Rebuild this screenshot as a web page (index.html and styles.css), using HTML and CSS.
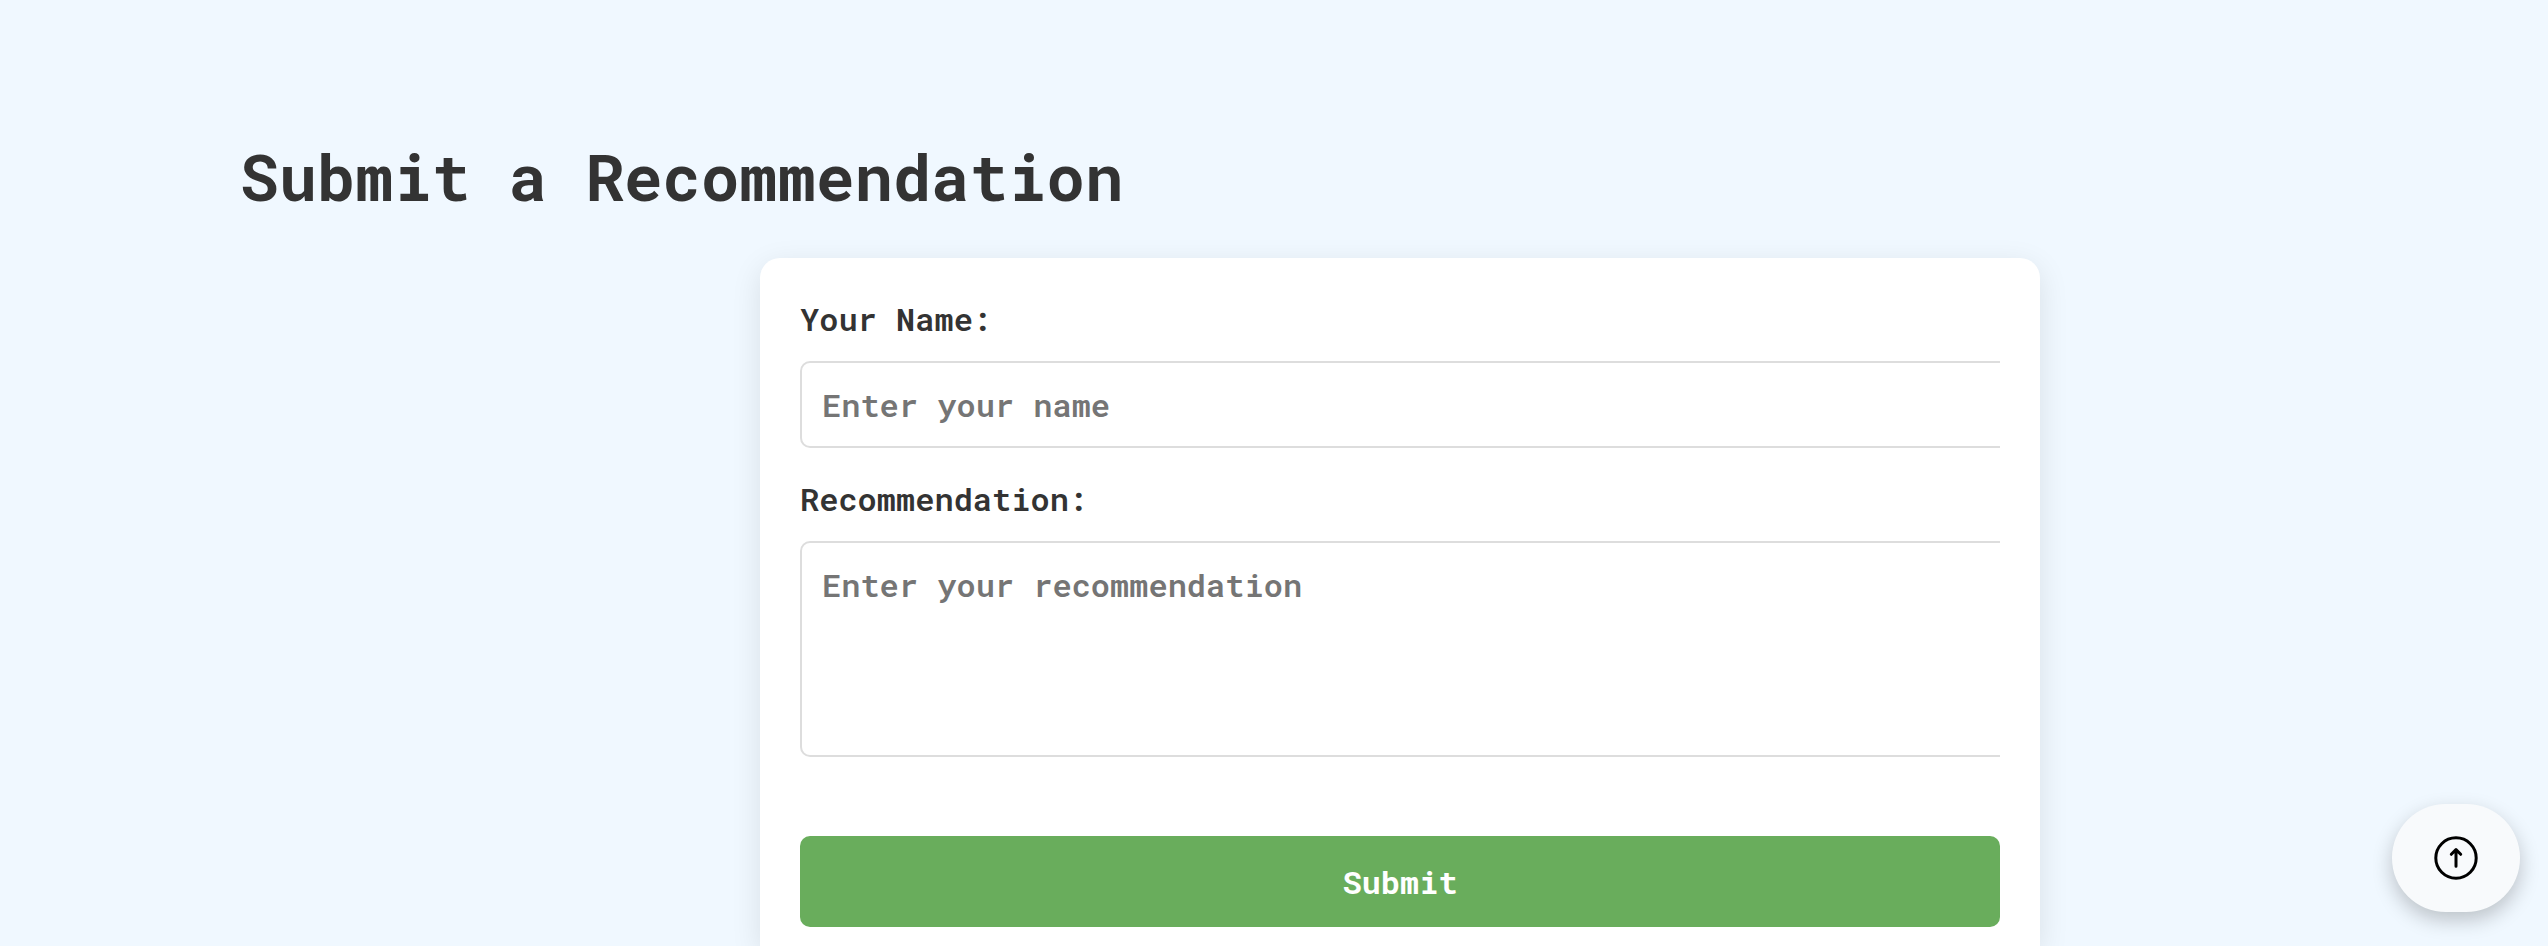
FILE: index.html
```html
<!DOCTYPE html>
<html lang="en">
<head>
<meta charset="utf-8">
<title>Submit a Recommendation</title>
<link rel="stylesheet" href="styles.css">
</head>
<body>
<section class="recommend">
  <h1 class="title">Submit a Recommendation</h1>
  <form class="card">
    <label class="label" for="name">Your Name:</label>
    <div class="field"><input class="control" id="name" type="text" placeholder="Enter your name"></div>
    <label class="label" for="text">Recommendation:</label>
    <div class="field"><textarea class="control area" id="text" placeholder="Enter your recommendation"></textarea></div>
    <button class="submit" type="button">Submit</button>
  </form>
</section>
<a class="to-top" href="#" aria-label="Back to top">
  <svg class="to-top-icon" viewBox="0 0 44 44" fill="none" stroke="#000" stroke-width="3" stroke-linecap="round" stroke-linejoin="round">
    <circle cx="22" cy="22" r="20.200"/>
    <path d="M22 30.300V13.800M17.300 18.300L22 13.600L26.700 18.300"/>
  </svg>
</a>
</body>
</html>
```
FILE: styles.css
```css
* { box-sizing: border-box; }
body {
  margin: 0;
  height: 946px;
  overflow: hidden;
  background: #f0f8ff;
  color: #333;
  font-family: "Roboto Mono", "Liberation Mono", monospace;
  font-weight: 600;
}
.recommend { padding: 134px 240px 0; }
.title {
  margin: 0 0 40px;
  font-size: 64px;
  line-height: 84px;
  font-weight: 660;
}
.card {
  width: 1280px;
  height: 688px;
  margin-left: 520px;
  padding: 40px;
  background: #fff;
  border-radius: 20px 20px 0 0;
  box-shadow: 0 8px 30px rgba(0, 0, 0, 0.1);
}
.label {
  display: block;
  height: 43px;
  margin-bottom: 20px;
  font-size: 32px;
  line-height: 42px;
}
.field { overflow: hidden; margin-bottom: 30px; }
.control {
  display: block;
  width: 1244px;
  height: 87px;
  padding: 20px;
  border: 2px solid #ddd;
  border-radius: 10px;
  background: #fff;
  font: inherit;
  font-size: 32px;
  line-height: 43px;
  resize: none;
}
.control::placeholder { color: #757575; opacity: 1; }
.area { height: 216px; overflow: hidden; }
.submit {
  display: block;
  width: 100%;
  height: 91px;
  margin-top: 79px;
  padding: 0 0 1px;
  border: 0;
  border-radius: 10px;
  background: #69ad5c;
  color: #fff;
  font: inherit;
  font-size: 32px;
  font-weight: 700;
}
.to-top {
  position: fixed;
  right: 28px;
  bottom: 34px;
  width: 128px;
  height: 108px;
  display: flex;
  align-items: center;
  justify-content: center;
  border-radius: 54px;
  background: #f8fafc;
  box-shadow: 0 8px 20px rgba(0, 0, 0, 0.22);
}
.to-top-icon { width: 44px; height: 44px; }
```
